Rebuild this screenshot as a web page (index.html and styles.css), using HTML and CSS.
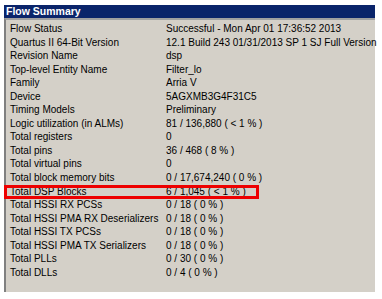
FILE: index.html
```html
<!DOCTYPE html>
<html>
<head>
<meta charset="utf-8">
<link rel="stylesheet" href="styles.css">
</head>
<body>
<div class="window">
  <div class="titlebar">Flow Summary</div>
  <div class="panel">
    <div class="table">
      <div class="row"><span class="k">Flow Status</span><span class="v">Successful - Mon Apr 01 17:36:52 2013</span></div>
      <div class="row"><span class="k">Quartus II 64-Bit Version</span><span class="v">12.1 Build 243 01/31/2013 SP 1 SJ Full Version</span></div>
      <div class="row"><span class="k">Revision Name</span><span class="v">dsp</span></div>
      <div class="row"><span class="k">Top-level Entity Name</span><span class="v">Filter_lo</span></div>
      <div class="row"><span class="k">Family</span><span class="v">Arria V</span></div>
      <div class="row"><span class="k">Device</span><span class="v">5AGXMB3G4F31C5</span></div>
      <div class="row"><span class="k">Timing Models</span><span class="v">Preliminary</span></div>
      <div class="row"><span class="k">Logic utilization (in ALMs)</span><span class="v">81 / 136,880 ( &lt; 1 % )</span></div>
      <div class="row"><span class="k">Total registers</span><span class="v">0</span></div>
      <div class="row"><span class="k">Total pins</span><span class="v">36 / 468 ( 8 % )</span></div>
      <div class="row"><span class="k">Total virtual pins</span><span class="v">0</span></div>
      <div class="row"><span class="k">Total block memory bits</span><span class="v">0 / 17,674,240 ( 0 % )</span></div>
      <div class="row hl"><span class="k">Total DSP Blocks</span><span class="v">6 / 1,045 ( &lt; 1 % )</span></div>
      <div class="row"><span class="k">Total HSSI RX PCSs</span><span class="v">0 / 18 ( 0 % )</span></div>
      <div class="row"><span class="k">Total HSSI PMA RX Deserializers</span><span class="v">0 / 18 ( 0 % )</span></div>
      <div class="row"><span class="k">Total HSSI TX PCSs</span><span class="v">0 / 18 ( 0 % )</span></div>
      <div class="row"><span class="k">Total HSSI PMA TX Serializers</span><span class="v">0 / 18 ( 0 % )</span></div>
      <div class="row"><span class="k">Total PLLs</span><span class="v">0 / 30 ( 0 % )</span></div>
      <div class="row"><span class="k">Total DLLs</span><span class="v">0 / 4 ( 0 % )</span></div>
    </div>
  </div>
</div>
</body>
</html>
```
FILE: styles.css
```css
html, body {
  margin: 0;
  padding: 0;
  background: #ffffff;
}
.window {
  margin: 5px 0 0 4px;
  width: 371px;
  font-family: "Liberation Sans", Arial, sans-serif;
  font-size: 10px;
  color: #000;
}
.titlebar {
  height: 13px;
  line-height: 13px;
  background: #0a246a;
  color: #fff;
  font-weight: bold;
  font-size: 10.5px;
  padding-left: 2px;
}
.panel {
  background: #d4d0c8;
  height: 274px;
  border-left: 2px solid #808080;
  border-top: 2px solid #a0a0a0;
  box-sizing: border-box;
}
.table {
  padding-top: 2px;
}
.row {
  display: flex;
  height: 13.55px;
  line-height: 13.55px;
  white-space: nowrap;
  position: relative;
}
.k {
  width: 156px;
  padding-left: 4px;
  flex: none;
}
.v {
  flex: none;
}
.hl::after {
  content: "";
  position: absolute;
  left: -2px;
  top: 0;
  width: 255px;
  height: 14px;
  border: 3px solid #ee0000;
  box-sizing: border-box;
}
```
